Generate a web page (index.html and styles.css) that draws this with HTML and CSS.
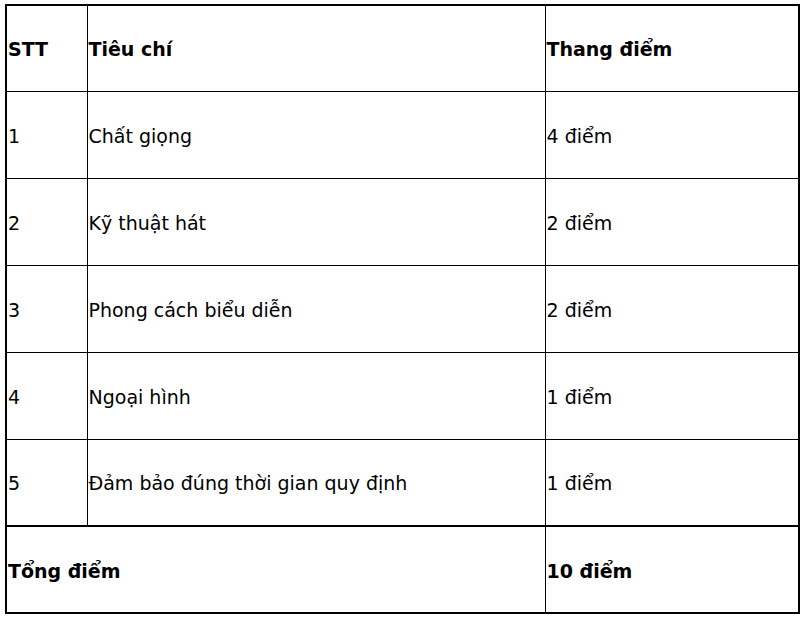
FILE: index.html
```html
<!DOCTYPE html>
<html lang="vi">
<head>
<meta charset="utf-8">
<link rel="stylesheet" href="styles.css">
</head>
<body>
<table class="score">
  <colgroup>
    <col class="c1"><col class="c2"><col class="c3">
  </colgroup>
  <tr class="head"><td>STT</td><td>Tiêu chí</td><td>Thang điểm</td></tr>
  <tr><td>1</td><td>Chất giọng</td><td>4 điểm</td></tr>
  <tr><td>2</td><td>Kỹ thuật hát</td><td>2 điểm</td></tr>
  <tr><td>3</td><td>Phong cách biểu diễn</td><td>2 điểm</td></tr>
  <tr><td>4</td><td>Ngoại hình</td><td>1 điểm</td></tr>
  <tr><td>5</td><td>Đảm bảo đúng thời gian quy định</td><td>1 điểm</td></tr>
  <tr class="total"><td colspan="2" class="merged">Tổng điểm</td><td>10 điểm</td></tr>
</table>
</body>
</html>
```
FILE: styles.css
```css
html, body {
  margin: 0;
  padding: 0;
  background: #fff;
}
body {
  padding: 4px 0 0 5px;
  font-family: "DejaVu Sans", Verdana, sans-serif;
  font-size: 19px;
  color: #000;
}
.score {
  border-collapse: collapse;
  border: 2px solid #000;
  width: 795px;
  table-layout: fixed;
}
.c1 { width: 81px; }
.c2 { width: 458px; }
.c3 { width: auto; }
.score td {
  border: 1px solid #000;
  height: 87px;
  padding: 2px 0 0 1px;
  vertical-align: middle;
  text-align: left;
  box-sizing: border-box;
}
.score .head td {
  height: 86px;
}
.score .head td,
.score .total td {
  font-weight: bold;
}
.score .total td {
  border-top: 2px solid #000;
}
```
